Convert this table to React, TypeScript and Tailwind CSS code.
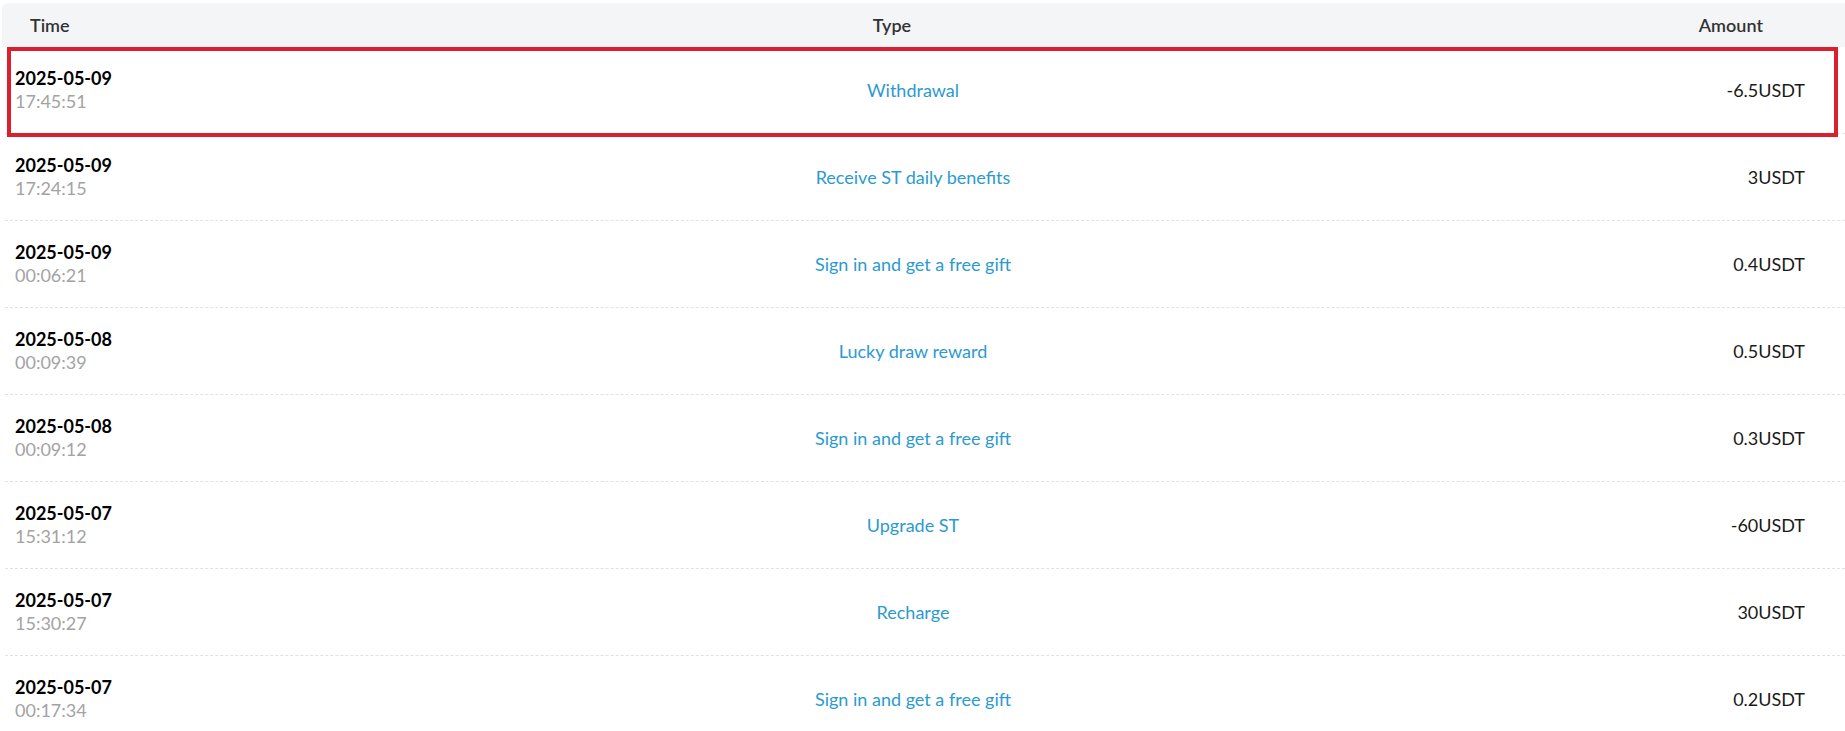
const records = [
  { date: '2025-05-09', time: '17:45:51', type: 'Withdrawal', amount: '-6.5USDT' },
  { date: '2025-05-09', time: '17:24:15', type: 'Receive ST daily benefits', amount: '3USDT' },
  { date: '2025-05-09', time: '00:06:21', type: 'Sign in and get a free gift', amount: '0.4USDT' },
  { date: '2025-05-08', time: '00:09:39', type: 'Lucky draw reward', amount: '0.5USDT' },
  { date: '2025-05-08', time: '00:09:12', type: 'Sign in and get a free gift', amount: '0.3USDT' },
  { date: '2025-05-07', time: '15:31:12', type: 'Upgrade ST', amount: '-60USDT' },
  { date: '2025-05-07', time: '15:30:27', type: 'Recharge', amount: '30USDT' },
  { date: '2025-05-07', time: '00:17:34', type: 'Sign in and get a free gift', amount: '0.2USDT' },
];

export default function App() {
  return (
    <div className="relative min-h-screen bg-white pt-[3px] pl-[2px] font-['Lato','Open_Sans',sans-serif]">
      {/* Header */}
      <div className="flex h-[44px] items-center rounded-tl-md bg-[#f3f5f7] text-[18px] font-semibold text-[#333]">
        <div className="w-[300px] pl-[28px]">Time</div>
        <div className="flex-1 text-center">Type</div>
        <div className="w-[363px] pr-[82px] text-right">Amount</div>
      </div>

      {/* Rows */}
      <div className="ml-[3px]">
        {records.map((r, i) => (
          <div
            key={i}
            className="flex h-[87px] items-center border-b border-dashed border-[#e2e2e2]"
          >
            <div className="w-[300px] pl-[10px]">
              <div className="text-[18px] font-bold leading-[23px] text-black">{r.date}</div>
              <div className="text-[18px] leading-[23px] text-[#a3a3a3]">{r.time}</div>
            </div>
            <div className="flex-1 text-center text-[18px] text-[#2b9ad0]">{r.type}</div>
            <div className="w-[324px] pr-[40px] text-right text-[18px] text-[#1a1a1a]">{r.amount}</div>
          </div>
        ))}
      </div>

      {/* highlight box */}
      <div className="pointer-events-none absolute left-[7px] top-[47px] h-[90px] w-[1831px] border-[4px] border-[#dc1f2e]" />
    </div>
  );
}
